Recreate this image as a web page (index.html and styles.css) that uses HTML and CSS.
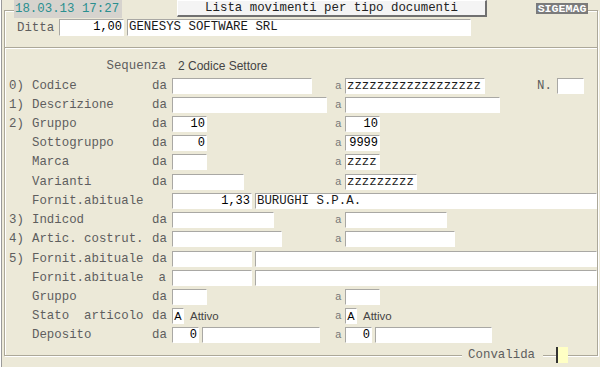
FILE: index.html
```html
<!DOCTYPE html>
<html lang="it">
<head>
  <meta charset="UTF-8">
  <title>Lista movimenti per tipo documenti</title>
  <link rel="stylesheet" href="styles.css">
</head>
<body>
  <div class="window">
    <div class="frame">
      <div class="head">
        <div class="date">18.03.13 17:27</div>
        <div class="title">Lista movimenti per tipo documenti</div>
        <div class="brand">SIGEMAG</div>
      </div>

      <div class="ditta">
        <span class="ditta-lbl">Ditta</span>
        <div class="fld tall w65 num">1,00</div>
        <div class="fld tall w344 gap">GENESYS SOFTWARE SRL</div>
      </div>

      <div class="sep"></div>

      <div class="rows">
        <div class="row">
          <span class="seq">Sequenza</span>
          <span class="wide sans seq-val">2 Codice Settore</span>
        </div>
        <div class="row">
          <span>0)</span><span class="lbl">Codice</span><span class="da">da</span>
          <div class="from"><div class="fld w140"></div></div>
          <span class="a">a</span>
          <div class="to">
            <div class="fld w140">zzzzzzzzzzzzzzzzzz</div>
            <span class="nlbl">N.</span>
            <div class="fld w27 nfld"></div>
          </div>
        </div>
        <div class="row">
          <span>1)</span><span class="lbl">Descrizione</span><span class="da">da</span>
          <div class="from"><div class="fld w155"></div></div>
          <span class="a">a</span>
          <div class="to"><div class="fld w155"></div></div>
        </div>
        <div class="row">
          <span>2)</span><span class="lbl">Gruppo</span><span class="da">da</span>
          <div class="from"><div class="fld w35 num">10</div></div>
          <span class="a">a</span>
          <div class="to"><div class="fld w35 num">10</div></div>
        </div>
        <div class="row">
          <span class="lbl">Sottogruppo</span><span class="da">da</span>
          <div class="from"><div class="fld w35 num">0</div></div>
          <span class="a">a</span>
          <div class="to"><div class="fld w35 num">9999</div></div>
        </div>
        <div class="row">
          <span class="lbl">Marca</span><span class="da">da</span>
          <div class="from"><div class="fld w35"></div></div>
          <span class="a">a</span>
          <div class="to"><div class="fld w35">zzzz</div></div>
        </div>
        <div class="row">
          <span class="lbl">Varianti</span><span class="da">da</span>
          <div class="from"><div class="fld w72"></div></div>
          <span class="a">a</span>
          <div class="to"><div class="fld w72">zzzzzzzzz</div></div>
        </div>
        <div class="row">
          <span class="lbl">Fornit.abituale</span>
          <div class="wide">
            <div class="fld w80 num">1,33</div>
            <div class="fld grow gap">BURUGHI S.P.A.</div>
          </div>
        </div>
        <div class="row">
          <span>3)</span><span class="lbl">Indicod</span><span class="da">da</span>
          <div class="from"><div class="fld w102"></div></div>
          <span class="a">a</span>
          <div class="to"><div class="fld w102"></div></div>
        </div>
        <div class="row">
          <span>4)</span><span class="lbl">Artic. costrut.</span><span class="da">da</span>
          <div class="from"><div class="fld w110"></div></div>
          <span class="a">a</span>
          <div class="to"><div class="fld w110"></div></div>
        </div>
        <div class="row">
          <span>5)</span><span class="lbl">Fornit.abituale</span><span class="da">da</span>
          <div class="wide">
            <div class="fld w80"></div>
            <div class="fld grow gap"></div>
          </div>
        </div>
        <div class="row">
          <span class="lbl">Fornit.abituale</span><span class="da">a</span>
          <div class="wide">
            <div class="fld w80"></div>
            <div class="fld grow gap"></div>
          </div>
        </div>
        <div class="row">
          <span class="lbl">Gruppo</span><span class="da">da</span>
          <div class="from"><div class="fld w35"></div></div>
          <span class="a">a</span>
          <div class="to"><div class="fld w35"></div></div>
        </div>
        <div class="row">
          <span class="lbl">Stato  articolo</span><span class="da">da</span>
          <div class="from"><div class="fld w12 code">A</div><span class="sans state">Attivo</span></div>
          <span class="a">a</span>
          <div class="to"><div class="fld w12 code">A</div><span class="sans state">Attivo</span></div>
        </div>
        <div class="row">
          <span class="lbl">Deposito</span><span class="da">da</span>
          <div class="from"><div class="fld w27 num">0</div><div class="fld w118 gap"></div></div>
          <span class="a">a</span>
          <div class="to"><div class="fld w27 num">0</div><div class="fld w117 gap"></div></div>
        </div>
      </div>

      <div class="foot">
        <span class="confirm">Convalida</span>
        <div class="flag"></div>
      </div>
    </div>
  </div>
</body>
</html>
```

FILE: styles.css
```css
body {
  margin: 0;
  background: #ece9d8;
  font-family: "Liberation Mono", "DejaVu Sans Mono", monospace;
  font-size: 12.4px;
  color: #5e5e5e;
}
.window {
  height: 367px;
  box-sizing: border-box;
  margin-left: 1px;
  padding-top: 10px;
  border-left: 1px solid #9a9a9a;
  box-shadow: -1px 0 #fff;
  overflow: hidden;
}
.frame {
  margin: 0 2px;
  border: 1px solid #aca899;
  box-shadow: inset 1px 1px #fff, 1px 1px #fff;
}

/* testata */
.head {
  display: flex;
  align-items: flex-start;
  height: 18px;
  margin: -11px 9px 0;
  background: #ece9d8;
}
.date {
  width: 108px;
  height: 18px;
  box-sizing: border-box;
  padding-left: 1px;
  background: #d6d3ce;
  color: #2a8f8f;
  line-height: 18px;
}
.title {
  width: 310px;
  height: 17px;
  box-sizing: border-box;
  margin-left: 55px;
  background: #f4f4f4;
  border-top: 1px solid #fff;
  border-left: 1px solid #fff;
  border-right: 2px solid #707070;
  border-bottom: 2px solid #707070;
  color: #222;
  text-align: center;
  line-height: 14px;
}
.brand {
  width: 52px;
  height: 11px;
  margin: 3px 0 0 49px;
  background: #7b7b7b;
  color: #fff;
  font-size: 11.6px;
  font-weight: bold;
  line-height: 11px;
  text-align: center;
}

/* ditta */
.ditta {
  display: flex;
  align-items: center;
  height: 17px;
  margin-top: 1px;
  padding-left: 12px;
}
.ditta-lbl {
  width: 42px;
}
.sep {
  margin-top: 11px;
  border-top: 1px solid #aca899;
  border-bottom: 1px solid #fff;
}

/* campi */
.fld {
  flex: none;
  box-sizing: border-box;
  height: 16px;
  padding: 0 1px;
  background: #fff;
  border: 1px solid;
  border-color: #a9a8a4 #fff #fff #a9a8a4;
  color: #1a1a1a;
  line-height: 14px;
  white-space: pre;
  overflow: hidden;
}
.fld.tall {
  height: 17px;
  line-height: 15px;
}
.fld.num {
  text-align: right;
  font-size: 12px;
  color: #000;
}
.fld.code {
  font-family: "Liberation Sans", Arial, sans-serif;
  font-size: 11px;
  padding: 0;
  text-align: center;
  color: #000;
}
.gap { margin-left: 3px; }
.grow { flex: 1; }
.w12 { width: 12px; }
.w27 { width: 27px; }
.w35 { width: 35px; }
.w65 { width: 65px; }
.w72 { width: 72px; }
.w80 { width: 80px; }
.w102 { width: 102px; }
.w110 { width: 110px; }
.w117 { width: 117px; }
.w118 { width: 118px; }
.w140 { width: 140px; }
.w155 { width: 155px; }
.w344 { width: 344px; }

/* righe */
.rows {
  margin-top: 7.75px;
  padding-left: 4px;
}
.row {
  display: grid;
  grid-template-columns: 23px 120px 20px 163px 10px 1fr;
  height: 19.23px;
  align-items: center;
  white-space: pre;
}
.lbl { grid-column: 2; }
.da {
  grid-column: 3;
  text-align: right;
  padding-right: 6px;
}
.from {
  grid-column: 4;
  display: flex;
  align-items: center;
}
.a {
  grid-column: 5;
  font-size: 11px;
  color: #777;
}
.to {
  grid-column: 6;
  display: flex;
  align-items: center;
}
.wide {
  grid-column: 4 / 7;
  display: flex;
  align-items: center;
}
.seq {
  grid-column: 1 / 4;
  text-align: right;
  padding-right: 6px;
}
.seq-val { padding-left: 6px; }
.sans {
  font-family: "Liberation Sans", Arial, sans-serif;
  font-size: 12px;
  color: #444;
}
.state {
  font-size: 11.5px;
  margin-left: 6px;
}
.nlbl { margin-left: 52px; }
.nfld { margin-left: 5px; }

/* piede */
.foot {
  display: flex;
  justify-content: flex-end;
  align-items: center;
  height: 16px;
  margin: 1.8px 0 -8px;
  padding-right: 29px;
}
.confirm {
  height: 16px;
  margin-right: 13px;
  padding: 0 8px 0 6px;
  background: #ece9d8;
  line-height: 16px;
}
.flag {
  width: 12px;
  height: 16px;
  box-sizing: border-box;
  background: #ffffc4;
  border-left: 2px solid #333;
}
```
